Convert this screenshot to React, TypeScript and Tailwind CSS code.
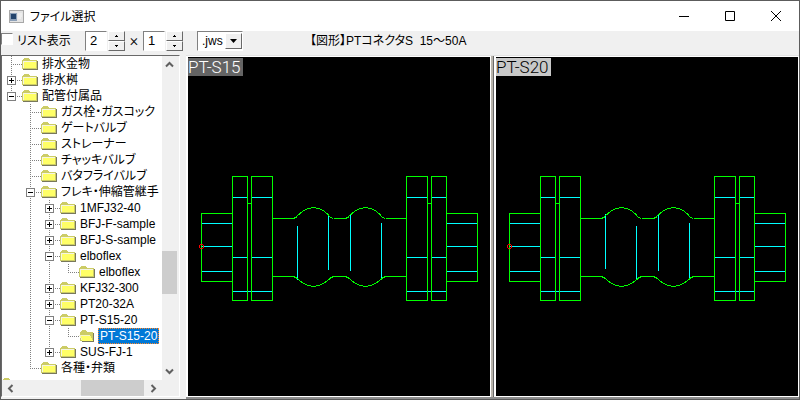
import React from "react";

const uiFont = "font-['Liberation_Sans','Noto_Sans_CJK_JP',sans-serif]";
const sunken = "border border-t-[#808080] border-l-[#808080] border-r-white border-b-white";
const raised = "border border-t-white border-l-white border-r-[#696969] border-b-[#696969]";

// Guide codes, one per 19px column: "." blank, "|" line through, "t" tee, "l" corner, "+"/"-" expander tee,
// "P"/"M" expander on the last branch.
type Row = { guides: string; label: string; open?: boolean };

const rows: Row[] = [
  { guides: "t", label: "排水金物" },
  { guides: "+", label: "排水桝" },
  { guides: "M", label: "配管付属品" },
  { guides: ".t", label: "ガス栓・ガスコック" },
  { guides: ".t", label: "ゲートバルブ" },
  { guides: ".t", label: "ストレーナー" },
  { guides: ".t", label: "チャッキバルブ" },
  { guides: ".t", label: "バタフライバルブ" },
  { guides: ".-", label: "フレキ・伸縮管継手" },
  { guides: ".|+", label: "1MFJ32-40" },
  { guides: ".|+", label: "BFJ-F-sample" },
  { guides: ".|+", label: "BFJ-S-sample" },
  { guides: ".|-", label: "elboflex" },
  { guides: ".||l", label: "elboflex" },
  { guides: ".|+", label: "KFJ32-300" },
  { guides: ".|+", label: "PT20-32A" },
  { guides: ".|-", label: "PT-S15-20" },
  { guides: ".||l", label: "PT-S15-20", open: true },
  { guides: ".|P", label: "SUS-FJ-1" },
  { guides: ".l", label: "各種・弁類" },
];

function Guide({ code }: { code: string }) {
  const expander = "+-PM".includes(code);
  const last = "lPM".includes(code);
  return (
    <svg className="h-4 w-[19px] shrink-0" viewBox="0 0 19 16" shapeRendering="crispEdges" aria-hidden="true">
      <g stroke="#808080" strokeDasharray="1 1" fill="none">
        {code !== "." && <path d={last ? "M8.5 0V8" : "M8.5 0V16"} />}
        {code !== "." && code !== "|" && <path d="M8 8.5H19" />}
      </g>
      {expander && (
        <g>
          <rect x="4.5" y="4.5" width="8" height="8" fill="#fff" stroke="#808080" />
          <path d={code === "+" || code === "P" ? "M6 8.5H11M8.5 6V11" : "M6 8.5H11"} stroke="#000" />
        </g>
      )}
    </svg>
  );
}

function Folder({ open }: { open?: boolean }) {
  return (
    <svg className="h-4 w-4 shrink-0" viewBox="0 0 16 16" shapeRendering="crispEdges" aria-hidden="true">
      {open ? (
        <>
          <path d="M1 13V4H2V3H3V2H7V3H8V4H14V13Z" fill="#cccc66" />
          <path d="M0 7H11V8H12V10H13V12H14V13H3V12H2V10H1V8H0Z" fill="#ffff66" />
          <path d="M0 7.5H11M1.5 8V10M2.5 10V12" stroke="#f4f4c8" />
          <path d="M3 13.5H15M14.5 5V14" stroke="#78785c" />
        </>
      ) : (
        <>
          <path d="M0 13V4H1V3H2V2H7V3H8V4H15V13Z" fill="#cccc66" />
          <path d="M1 5H14V12H1Z" fill="#ffff66" />
          <path d="M1 5.5H14M1.5 5V12" stroke="#f4f4e4" />
          <path d="M1 13.5H16M15.5 5V14" stroke="#78785c" />
        </>
      )}
    </svg>
  );
}

function TreeRow({ row }: { row: Row }) {
  return (
    <li role="treeitem" aria-selected={!!row.open} className="flex h-4 shrink-0 items-center">
      {row.guides.split("").map((c, i) => (
        <Guide key={i} code={c} />
      ))}
      <Folder open={row.open} />
      <span
        className={
          row.open
            ? "ml-[3px] h-4 border border-dotted border-[#ff8728] bg-[#0078d7] px-px leading-[14px] whitespace-nowrap text-white"
            : "ml-1 leading-4 whitespace-nowrap"
        }
      >
        {row.label}
      </span>
    </li>
  );
}

function Arrow({ d, label, className }: { d: string; label: string; className: string }) {
  return (
    <button type="button" aria-label={label} className={"flex shrink-0 items-center justify-center " + className}>
      <svg className="h-[9px] w-[9px]" viewBox="0 0 9 9" fill="none" stroke="#606060" strokeWidth="2">
        <path d={d} />
      </svg>
    </button>
  );
}

function Spin({ value, label }: { value: string; label: string }) {
  return (
    <div className="flex h-5 gap-px">
      <input
        aria-label={label}
        defaultValue={value}
        className={"w-[22px] rounded-none bg-white pl-1 text-[13px] leading-4 outline-none " + sunken}
      />
      <div className="flex w-[17px] flex-col">
        {["M2 0H3V1H4V2H1V1H2Z", "M1 0H4V1H3V2H2V1H1Z"].map((d, i) => (
          <button
            key={d}
            type="button"
            aria-label={label + (i ? " −" : " +")}
            className={"flex flex-1 items-center justify-center bg-[#f0f0f0] " + raised}
          >
            <svg className="h-[2px] w-[5px]" viewBox="0 0 5 2" shapeRendering="crispEdges">
              <path d={d} />
            </svg>
          </button>
        ))}
      </div>
    </div>
  );
}

const bulge =
  "M105 161.5L108 160.5L109.5 158.5L112 156.5L115 154L120 151.5L125.5 150.5L131 151.5L136 154L140 157.5L142 160L145 161.5" +
  "M105 219.5L108 220.5L110 222L114 225.5L120 228.5L125.5 229.5L131 228.5L136 226L141 222.5L143 220.5L146 219.5";

function Drawing({ name, inner, tag }: { name: string; inner: string; tag: string }) {
  return (
    <figure className="relative min-w-0 flex-1 border border-l-2 border-white bg-black">
      <svg
        className="h-full w-full"
        viewBox="0 0 302 339"
        fill="none"
        shapeRendering="crispEdges"
        role="img"
        aria-label={name}
      >
        <g stroke="#00ffff">
          <path d="M13 166.5H44M13 189.5H44M13 214.5H44M258 166.5H289M258 189.5H289M258 214.5H289" />
          <path d="M44 140.5H59M63 140.5H84M44 200.5H59M63 200.5H84M44 234.5H84" />
          <path d="M218 140.5H239M243 140.5H258M218 200.5H239M243 200.5H258M218 234.5H258" />
          <path d={inner} />
        </g>
        <g stroke="#00ff00">
          <path d="M44 156.5H13.5V224.5H44M258 156.5H289.5V224.5H258" />
          <path d="M44.5 119.5H59.5V243.5H44.5ZM63.5 119.5H84.5V243.5H63.5ZM59 146.5H64" />
          <path d="M218.5 119.5H239.5V243.5H218.5ZM243.5 119.5H258.5V243.5H243.5ZM239 146.5H244" />
          <path d="M84 161.5H105M84 219.5H105M146 161.5H157M146 219.5H157M198 161.5H218M198 219.5H218" />
          <path d={bulge} />
          <path d={bulge} transform="translate(52 0)" />
        </g>
        <circle cx="13.5" cy="189.5" r="2" stroke="#ff0000" />
      </svg>
      <figcaption
        className={"absolute top-px left-0 h-[18px] w-[55px] font-['Roboto'] text-[17px] leading-[18px] font-light whitespace-nowrap " + tag}
      >
        {name}
      </figcaption>
    </figure>
  );
}

export default function App() {
  return (
    <div className={"flex h-screen flex-col bg-[#5c5c5c] p-px text-xs text-black " + uiFont}>
      <header className="flex h-[30px] shrink-0 items-center bg-white pl-2">
        <svg className="h-[13px] w-[15px]" viewBox="0 0 15 13" aria-hidden="true">
          <rect x=".5" y=".5" width="14" height="12" fill="#e4e4e4" stroke="#a8a8a8" />
          <rect x="1" y="3" width="7" height="8" fill="#8da0b8" />
          <rect x="2" y="4" width="5" height="5" fill="#24446c" />
          <path d="M9 4H13M9 6H13M9 8H12" stroke="#f8f8f8" />
        </svg>
        <h1 className="ml-1.5 flex-1 font-['Noto_Sans_CJK_JP',sans-serif] text-xs [font-feature-settings:'palt']">
          ファイル選択
        </h1>
        {[
          ["最小化", "M0 5.5H10"],
          ["最大化", "M.5 .5H9.5V9.5H.5Z"],
          ["閉じる", "M0 0L10 10M10 0L0 10"],
        ].map(([label, d]) => (
          <button key={label} type="button" aria-label={label} className="flex h-full w-[46px] items-center justify-center">
            <svg className="h-2.5 w-2.5" viewBox="0 0 10 10" fill="none" stroke="#000">
              <path d={d} />
            </svg>
          </button>
        ))}
      </header>

      <div className="flex h-6 shrink-0 items-start bg-[#f0f0f0]">
        <label className="flex h-5 w-[84px] items-center gap-1 whitespace-nowrap [font-feature-settings:'palt']">
          <input type="checkbox" className={"mb-1 h-3 w-3 shrink-0 appearance-none bg-white " + sunken} />
          リスト表示
        </label>
        <Spin value="2" label="列" />
        <span className="w-[18px] text-center font-['Roboto'] text-base leading-5 font-light">×</span>
        <Spin value="1" label="行" />
        <div className={"relative ml-[14px] h-5 w-[46px] bg-white " + sunken}>
          <select aria-label="拡張子" className="h-full w-full appearance-none bg-transparent pl-1 leading-4 outline-none">
            <option>.jws</option>
          </select>
          <span
            className={"pointer-events-none absolute top-px right-0 bottom-px flex w-[17px] items-center justify-center bg-[#f0f0f0] " + raised}
          >
            <svg className="h-1 w-[7px]" viewBox="0 0 7 4">
              <path d="M0 0H7L3.5 4Z" />
            </svg>
          </span>
        </div>
        <p className="ml-[67px] leading-5 whitespace-pre [font-feature-settings:'palt']">【図形】PTコネクタS  15～50A</p>
      </div>

      <main className="flex min-h-0 flex-1 bg-[#f0f0f0]">
        <section className="mr-1.5 mb-0.5 flex w-[179px] shrink-0 flex-col border border-t-[#696969] border-r-white border-b-white border-l-[#696969]">
          <div className="flex min-h-0 flex-1">
            <ul role="tree" className="flex min-w-0 flex-1 flex-col overflow-hidden bg-white pl-px [font-feature-settings:'palt']">
              {rows.map((row, i) => (
                <TreeRow key={i} row={row} />
              ))}
              <li className="h-1">
                <svg className="h-1 w-4" viewBox="0 0 16 4" shapeRendering="crispEdges">
                  <path d="M0 4V3H1V2H6V3H7V4Z" fill="#cccc66" />
                </svg>
              </li>
            </ul>
            <div className="mr-0.5 flex w-[15px] flex-col">
              <Arrow d="M1 6.5L4.5 3L8 6.5" label="上" className="h-[17px]" />
              <div className="grow-[178]" />
              <div className="grow-[43] bg-[#cdcdcd]" />
              <div className="grow-[69]" />
              <Arrow d="M1 2.5L4.5 6L8 2.5" label="下" className="h-[17px]" />
            </div>
          </div>
          <div className="mr-[17px] flex h-4">
            <Arrow d="M6.5 1L3 4.5L6.5 8" label="左" className="w-[17px]" />
            <div className="grow-[62]" />
            <div className="grow-[64] bg-[#cdcdcd]" />
            <div className="grow" />
            <Arrow d="M2.5 1L6 4.5L2.5 8" label="右" className="w-[17px]" />
          </div>
        </section>

        <section className="flex min-w-0 flex-1 border-t border-b-2 border-t-[#e3e3e3] border-b-[#8c8c8c]">
          <Drawing name="PT-S15" inner="M109.5 169V223M140.5 157V213M162.5 157V214M193.5 166V223" tag="bg-[#646464] text-white" />
          <div className="w-[3px] border-r border-[#696969] bg-[#b8b4ac]" />
          <Drawing name="PT-S20" inner="M109.5 157V212M140.5 169V223M162.5 157V214M193.5 166V223" tag="bg-[#c8c8c8] text-black" />
        </section>
      </main>
    </div>
  );
}
